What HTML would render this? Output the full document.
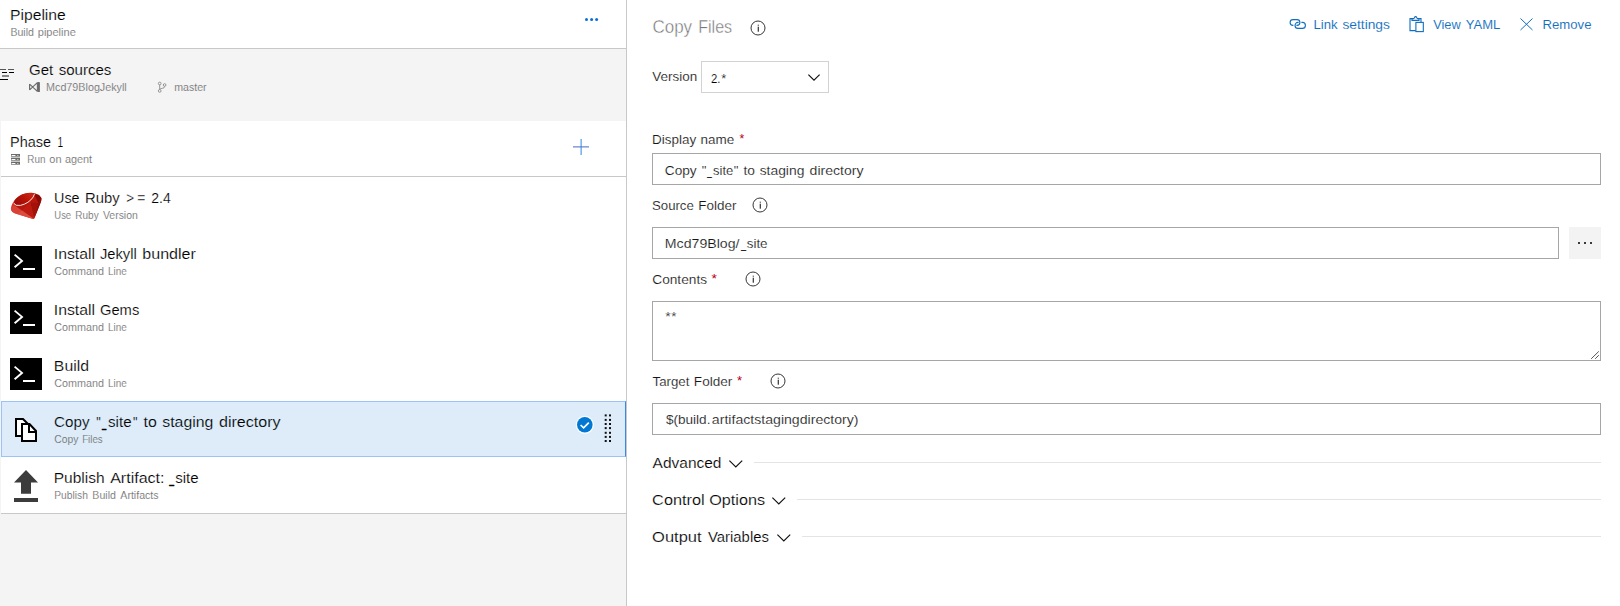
<!DOCTYPE html>
<html lang="en">
<head>
<meta charset="utf-8">
<title>Build pipeline - Copy Files</title>
<style>
*{box-sizing:border-box;margin:0;padding:0}
html,body{width:1620px;height:606px;overflow:hidden;background:#fff}
body{font-family:"Liberation Sans",sans-serif;color:#000;position:relative;font-size:14px}
.b{position:absolute}
.t{position:absolute;white-space:pre;line-height:1}
.w{position:absolute;left:0;top:0;transform-origin:0 50%}
svg{position:absolute;overflow:visible}
.inp{position:absolute;border:1px solid #a6a6a6;background:#fff}
.hr{position:absolute;height:1px;background:#e4e4e4}
</style>
</head>
<body>
<aside class="tasks" aria-label="Build pipeline tasks">
<div class="b" style="left:0;top:0;width:626px;height:606px;background:#f4f4f4"></div>
<div class="b" style="left:0;top:0;width:626px;height:48px;background:#fff"></div>
<div class="b" style="left:0;top:48px;width:626px;height:1px;background:#c8c8c8"></div>
<div class="b" style="left:1px;top:121px;width:625px;height:55px;background:#fff"></div>
<div class="b" style="left:1px;top:176px;width:625px;height:1px;background:#c8c8c8"></div>
<div class="b" style="left:1px;top:177px;width:625px;height:336px;background:#fff"></div>
<div class="b" style="left:1px;top:513px;width:625px;height:1px;background:#c8c8c8"></div>
<div class="b" style="left:1px;top:401px;width:625px;height:56px;background:#deecf9;border:1px solid #9cc3f8;border-right-color:#3c86e6"></div>
<div class="b" style="left:626px;top:0;width:1px;height:606px;background:#c8c8c8"></div>
<!-- get sources glyph (clipped at left edge) -->
<div class="b" style="left:0;top:69px;width:6px;height:1px;background:#555"></div>
<div class="b" style="left:8px;top:69px;width:6px;height:1px;background:#555"></div>
<div class="b" style="left:2px;top:72px;width:5px;height:1px;background:#000"></div>
<div class="b" style="left:9px;top:72px;width:5px;height:1px;background:#000"></div>
<div class="b" style="left:2px;top:75px;width:7px;height:2px;background:#888"></div>
<div class="b" style="left:0;top:79px;width:8px;height:1px;background:#000"></div>
<!-- visual studio glyph -->
<svg style="left:29px;top:81px" width="12" height="12" viewBox="0 0 12 12"><path d="M0.6 3 V9 M0.6 3.2 L8.6 10.6 M0.6 8.8 L8.6 1.4 M8.4 1.6 V10.4" fill="none" stroke="#6a6a6a" stroke-width="1.15"/><rect x="8.6" y="1" width="2.3" height="10" rx="0.4" fill="#6a6a6a"/></svg>
<!-- branch glyph -->
<svg style="left:157px;top:81px" width="10" height="12" viewBox="0 0 10 12"><g fill="none" stroke="#8a8a8a" stroke-width="0.9"><circle cx="2.7" cy="2.5" r="1.35"/><circle cx="2.7" cy="9.9" r="1.35"/><circle cx="7.6" cy="4" r="1.35"/><path d="M2.7 3.9 V8.5 M7.6 5.4 Q7.6 7.2 5.4 7.3 Q2.9 7.4 2.8 8.5"/></g></svg>
<!-- server glyph -->
<svg style="left:11px;top:154px" width="9" height="11" viewBox="0 0 9 11"><rect x="0" y="0" width="9" height="11" fill="#c9c9c9"/><g fill="#6b6b6b"><rect x="0" y="0" width="9" height="3"/><rect x="0" y="4" width="9" height="3"/><rect x="0" y="8" width="9" height="3"/></g><g fill="#fff"><rect x="0.6" y="1" width="3.8" height="1"/><rect x="0.6" y="5" width="3.8" height="1"/><rect x="0.6" y="9" width="3.8" height="1"/></g><g fill="#c8d6c0"><rect x="6.2" y="1" width="1.2" height="1"/><rect x="6.2" y="5" width="1.2" height="1"/><rect x="6.2" y="9" width="1.2" height="1"/></g><g fill="#9c9c9c"><rect x="0" y="2" width="9" height="1"/><rect x="0" y="6" width="9" height="1"/><rect x="0" y="10" width="9" height="1"/></g></svg>
<!-- pipeline more dots -->
<svg style="left:584px;top:17px" width="16" height="5" viewBox="0 0 16 5"><g fill="#0a6fd8"><circle cx="2.5" cy="2.5" r="1.5"/><circle cx="7.6" cy="2.5" r="1.5"/><circle cx="12.6" cy="2.5" r="1.5"/></g></svg>
<!-- plus -->
<svg style="left:573px;top:139px" width="16" height="16" viewBox="0 0 16 16"><rect x="0" y="7.4" width="16" height="1" fill="#4a68c4"/><rect x="7.6" y="0" width="1" height="16" fill="#2f86e0"/></svg>
<!-- ruby -->
<svg style="left:10px;top:190px" width="32" height="32" viewBox="0 0 32 32">
<defs>
<linearGradient id="rb" x1="0" y1="1" x2="1" y2="0"><stop offset="0" stop-color="#e24d40"/><stop offset="0.5" stop-color="#c62216"/><stop offset="1" stop-color="#a81007"/></linearGradient>
<linearGradient id="rt" x1="0" y1="0.6" x2="1" y2="0.4"><stop offset="0" stop-color="#98090a"/><stop offset="0.55" stop-color="#b81408"/><stop offset="1" stop-color="#cf2a14"/></linearGradient>
</defs>
<path d="M0.9 18.8 C1.4 14 4.4 9.4 9.9 5.6 C14 3 19 2.3 23 2.9 C26.4 3.4 29.6 4.8 31.3 7.8 C31.9 9 31.2 11.2 30.1 14 L24.4 28.3 Q23.9 29.2 23 28.9 L6.9 24.1 Q1 22.4 0.9 18.8 Z" fill="url(#rb)"/>
<path d="M24.1 4.5 L28.9 4.8 L31.4 8.2 L28.3 12.9 Z" fill="#870a05"/>
<path d="M24.1 4.5 L28.3 12.9 L20.3 12.3 Z" fill="#b5160d"/>
<path d="M20.3 12.3 L28.3 12.9 L24.1 28.6 Z" fill="#a3120a"/>
<path d="M28.3 12.9 L31.4 8.2 Q31.6 10 30.1 14 L24.3 28.4 Z" fill="#900d07"/>
<path d="M4.2 15 L12 20.4 L6.9 24.1 Q1.4 22.6 0.9 18.8 Z" fill="#d84236"/>
<path d="M12 20.4 L20.3 12.3 L23.7 28.8 Z" fill="#bd1b11"/>
<path d="M6.9 24.1 L12 20.4 L23.7 28.8 Q23.3 29.1 22.6 28.8 Z" fill="#dc4c40"/>
<path d="M4.2 15 Q9 16.6 16.5 12.8 L20.3 12.3 L12 20.4 Z" fill="#b4170d"/>
<ellipse cx="14.2" cy="9.1" rx="10.7" ry="5" transform="rotate(-23 14.2 9.1)" fill="url(#rt)"/>
<path d="M3.9 13.6 Q5.4 16.2 10.4 15.4 Q19 13.4 23.2 7 L24.3 4.5" fill="none" stroke="#fff3f0" stroke-width="1" stroke-linecap="round" opacity="0.92"/>
</svg>
<!-- terminal icons -->
<svg style="left:10px;top:246px" width="32" height="32" viewBox="0 0 32 32"><rect width="32" height="32" fill="#000"/><path d="M4.6 8.6 L12 14.9 L4.6 21.2" fill="none" stroke="#fff" stroke-width="1.9"/><rect x="13" y="22" width="12" height="2" fill="#fff"/></svg>
<svg style="left:10px;top:302px" width="32" height="32" viewBox="0 0 32 32"><rect width="32" height="32" fill="#000"/><path d="M4.6 8.6 L12 14.9 L4.6 21.2" fill="none" stroke="#fff" stroke-width="1.9"/><rect x="13" y="22" width="12" height="2" fill="#fff"/></svg>
<svg style="left:10px;top:358px" width="32" height="32" viewBox="0 0 32 32"><rect width="32" height="32" fill="#000"/><path d="M4.6 8.6 L12 14.9 L4.6 21.2" fill="none" stroke="#fff" stroke-width="1.9"/><rect x="13" y="22" width="12" height="2" fill="#fff"/></svg>
<!-- copy files icon -->
<svg style="left:10px;top:414px" width="32" height="32" viewBox="0 0 32 32"><g fill="#fff" stroke="#000" stroke-width="2" stroke-linejoin="miter"><path d="M6 5 H13 L18 10 V22 H6 Z"/><path d="M12 10 H19.5 L26 17 V27 H12 Z"/><path d="M19 10 V18 H26" fill="none"/></g></svg>
<!-- upload icon -->
<svg style="left:10px;top:470px" width="32" height="32" viewBox="0 0 32 32"><path d="M16 0 L28 12.6 H21 V23.8 H11 V12.6 H4 Z" fill="#3c3c3c"/><rect x="4" y="28" width="24" height="4" fill="#3c3c3c"/></svg>
<!-- selected check -->
<svg style="left:575px;top:415px" width="20" height="20" viewBox="0 0 20 20"><circle cx="9.8" cy="9.8" r="9" fill="#fff"/><circle cx="9.8" cy="9.8" r="7.8" fill="#0078d4"/><path d="M5.6 10 L8.6 12.8 L13.8 7.6" fill="none" stroke="#fff" stroke-width="1.7"/></svg>
<!-- drag handle -->
<svg style="left:604px;top:414px" width="8" height="29" viewBox="0 0 8 29"><g fill="#111">
<rect x="0.7" y="0.4" width="2" height="2"/><rect x="5" y="0.4" width="2" height="2"/>
<rect x="0.7" y="4.9" width="2" height="2"/><rect x="5" y="4.9" width="2" height="2"/>
<rect x="0.7" y="9" width="2" height="2"/><rect x="5" y="9" width="2" height="2"/>
<rect x="0.7" y="13.1" width="2" height="2"/><rect x="5" y="13.1" width="2" height="2"/>
<rect x="0.7" y="17.8" width="2" height="2"/><rect x="5" y="17.8" width="2" height="2"/>
<rect x="0.7" y="21.9" width="2" height="2"/><rect x="5" y="21.9" width="2" height="2"/>
<rect x="0.7" y="26" width="2" height="2"/><rect x="5" y="26" width="2" height="2"/>
</g></svg>
<span class="t" id="t1" style="left:11px;top:7px;font-size:15.36px;color:#000;-webkit-text-stroke:0.18px #fff"><span class="w" id="t1_0" style="transform:translateX(-1.04px) scaleX(1.022)">Pipeline</span></span>
<span class="t" id="t2" style="left:11px;top:27px;font-size:10.62px;color:#707070;-webkit-text-stroke:0.12px #fff"><span class="w" id="t2_0" style="transform:translateX(-0.6px) scaleX(0.998)">Build</span> <span class="w" id="t2_1" style="transform:translateX(26.74px) scaleX(1.041)">pipeline</span></span>
<span class="t" id="t3" style="left:29px;top:62px;font-size:15.36px;color:#000;-webkit-text-stroke:0.18px #f4f4f4"><span class="w" id="t3_0" style="transform:translateX(-0.02px) scaleX(0.98)">Get</span> <span class="w" id="t3_1" style="transform:translateX(29.65px) scaleX(0.98)">sources</span></span>
<span class="t" id="t4" style="left:46px;top:82px;font-size:10.62px;color:#707070;-webkit-text-stroke:0.12px #f4f4f4"><span class="w" id="t4_0" style="transform:translateX(0.04px) scaleX(1.014)">Mcd79BlogJekyll</span></span>
<span class="t" id="t5" style="left:175px;top:82px;font-size:10.62px;color:#707070;-webkit-text-stroke:0.12px #f4f4f4"><span class="w" id="t5_0" style="transform:translateX(-0.75px) scaleX(0.998)">master</span></span>
<span class="t" id="t6" style="left:11px;top:134px;font-size:15.36px;color:#000;-webkit-text-stroke:0.18px #fff"><span class="w" id="t6_0" style="transform:translateX(-0.93px) scaleX(0.941)">Phase</span> <span class="w" id="t6_1" style="transform:translateX(46.54px) scaleX(0.66)">1</span></span>
<span class="t" id="t7" style="left:28px;top:154px;font-size:10.62px;color:#707070;-webkit-text-stroke:0.12px #fff"><span class="w" id="t7_0" style="transform:translateX(-0.64px) scaleX(0.929)">Run</span> <span class="w" id="t7_1" style="transform:translateX(21.35px) scaleX(1.035)">on</span> <span class="w" id="t7_2" style="transform:translateX(36.91px) scaleX(1.024)">agent</span></span>
<span class="t" id="r0a" style="left:55px;top:190px;font-size:15.36px;color:#000;-webkit-text-stroke:0.18px #fff"><span class="w" id="r0a_0" style="transform:translateX(-0.92px) scaleX(0.934)">Use</span> <span class="w" id="r0a_1" style="transform:translateX(30.08px) scaleX(0.965)">Ruby</span> <span class="w" id="r0a_2" style="transform:translateX(71.31px) scaleX(0.871)">&gt;</span><span class="w" id="r0a_3" style="transform:translateX(82.32px) scaleX(0.893)">=</span> <span class="w" id="r0a_4" style="transform:translateX(96.32px) scaleX(0.911)">2.4</span></span>
<span class="t" id="r0b" style="left:55px;top:210px;font-size:10.62px;color:#707070;-webkit-text-stroke:0.12px #fff"><span class="w" id="r0b_0" style="transform:translateX(-0.68px) scaleX(0.891)">Use</span> <span class="w" id="r0b_1" style="transform:translateX(20.3px) scaleX(0.942)">Ruby</span> <span class="w" id="r0b_2" style="transform:translateX(47.91px) scaleX(0.987)">Version</span></span>
<span class="t" id="r1a" style="left:55px;top:246px;font-size:15.36px;color:#000;-webkit-text-stroke:0.18px #fff"><span class="w" id="r1a_0" style="transform:translateX(-1.24px) scaleX(1.028)">Install</span> <span class="w" id="r1a_1" style="transform:translateX(44.91px) scaleX(0.96)">Jekyll</span> <span class="w" id="r1a_2" style="transform:translateX(87.37px) scaleX(1.044)">bundler</span></span>
<span class="t" id="r1b" style="left:54px;top:266px;font-size:10.62px;color:#707070;-webkit-text-stroke:0.12px #fff"><span class="w" id="r1b_0" style="transform:translateX(0.28px) scaleX(1.015)">Command</span> <span class="w" id="r1b_1" style="transform:translateX(54.01px) scaleX(0.929)">Line</span></span>
<span class="t" id="r2a" style="left:55px;top:302px;font-size:15.36px;color:#000;-webkit-text-stroke:0.18px #fff"><span class="w" id="r2a_0" style="transform:translateX(-1.24px) scaleX(1.028)">Install</span> <span class="w" id="r2a_1" style="transform:translateX(44.93px) scaleX(0.96)">Gems</span></span>
<span class="t" id="r2b" style="left:54px;top:322px;font-size:10.62px;color:#707070;-webkit-text-stroke:0.12px #fff"><span class="w" id="r2b_0" style="transform:translateX(0.28px) scaleX(1.015)">Command</span> <span class="w" id="r2b_1" style="transform:translateX(54.01px) scaleX(0.929)">Line</span></span>
<span class="t" id="r3a" style="left:55px;top:358px;font-size:15.36px;color:#000;-webkit-text-stroke:0.18px #fff"><span class="w" id="r3a_0" style="transform:translateX(-1.14px) scaleX(1.027)">Build</span></span>
<span class="t" id="r3b" style="left:54px;top:378px;font-size:10.62px;color:#707070;-webkit-text-stroke:0.12px #fff"><span class="w" id="r3b_0" style="transform:translateX(0.28px) scaleX(1.015)">Command</span> <span class="w" id="r3b_1" style="transform:translateX(54.01px) scaleX(0.929)">Line</span></span>
<span class="t" id="r4a" style="left:54px;top:414px;font-size:15.36px;color:#000;-webkit-text-stroke:0.18px #deecf9"><span class="w" id="r4a_0" style="transform:translateX(0.1px) scaleX(0.988)">Copy</span> <span class="w" id="r4a_1" style="transform:translateX(42.26px) scaleX(0.82)">"</span><span class="w" id="r4a_2" style="transform:translateX(47.89px) scaleX(0.5);-webkit-text-stroke:0.35px currentColor">_</span><span class="w" id="r4a_3" style="transform:translateX(54.04px) scaleX(0.985)">site</span><span class="w" id="r4a_4" style="transform:translateX(79.03px) scaleX(0.82)">"</span> <span class="w" id="r4a_5" style="transform:translateX(89.47px) scaleX(1.035)">to</span> <span class="w" id="r4a_6" style="transform:translateX(108.26px) scaleX(1.031)">staging</span> <span class="w" id="r4a_7" style="transform:translateX(164.96px) scaleX(1.047)">directory</span></span>
<span class="t" id="r4b" style="left:54px;top:434px;font-size:10.62px;color:#707070;-webkit-text-stroke:0.12px #deecf9"><span class="w" id="r4b_0" style="transform:translateX(0.32px) scaleX(0.974)">Copy</span> <span class="w" id="r4b_1" style="transform:translateX(28.15px) scaleX(0.916)">Files</span></span>
<span class="t" id="r5a" style="left:55px;top:470px;font-size:15.36px;color:#000;-webkit-text-stroke:0.18px #fff"><span class="w" id="r5a_0" style="transform:translateX(-1.23px) scaleX(1.01)">Publish</span> <span class="w" id="r5a_1" style="transform:translateX(55.13px) scaleX(1.045)">Artifact:</span> <span class="w" id="r5a_2" style="transform:translateX(114.21px) scaleX(0.561);-webkit-text-stroke:0.35px currentColor">_</span><span class="w" id="r5a_3" style="transform:translateX(120.19px) scaleX(0.98)">site</span></span>
<span class="t" id="r5b" style="left:55px;top:490px;font-size:10.62px;color:#707070;-webkit-text-stroke:0.12px #fff"><span class="w" id="r5b_0" style="transform:translateX(-0.87px) scaleX(0.969)">Publish</span> <span class="w" id="r5b_1" style="transform:translateX(37.34px) scaleX(0.998)">Build</span> <span class="w" id="r5b_2" style="transform:translateX(65.33px) scaleX(0.999)">Artifacts</span></span>
</aside>
<main class="details" aria-label="Copy Files task settings">
<div class="inp" style="left:701px;top:61px;width:128px;height:32px;border-color:#d2d2d2"></div>
<div class="inp" style="left:652px;top:153px;width:949px;height:32px"></div>
<div class="inp" style="left:652px;top:227px;width:907px;height:32px"></div>
<div class="b" style="left:1569px;top:227px;width:32px;height:32px;background:#f3f3f3"></div>
<div class="inp" style="left:652px;top:301px;width:949px;height:60px"></div>
<div class="inp" style="left:652px;top:403px;width:949px;height:32px"></div>
<div class="hr" style="left:754px;top:462px;width:847px"></div>
<div class="hr" style="left:797px;top:499px;width:804px"></div>
<div class="hr" style="left:802px;top:536px;width:799px"></div>
<!-- info icons -->
<svg style="left:749.8px;top:19.55px" width="16" height="16" viewBox="0 0 16 16"><circle cx="8" cy="8" r="7" fill="none" stroke="#2b2b2b" stroke-width="0.95"/><rect x="7.7" y="4.7" width="1.2" height="1" fill="#333"/><rect x="7.7" y="6.7" width="1.2" height="5" fill="#333"/></svg>
<svg style="left:752.3px;top:197.3px" width="16" height="16" viewBox="0 0 16 16"><circle cx="8" cy="8" r="7" fill="none" stroke="#2b2b2b" stroke-width="0.95"/><rect x="7.7" y="4.7" width="1.2" height="1" fill="#333"/><rect x="7.7" y="6.7" width="1.2" height="5" fill="#333"/></svg>
<svg style="left:744.8px;top:271.3px" width="16" height="16" viewBox="0 0 16 16"><circle cx="8" cy="8" r="7" fill="none" stroke="#2b2b2b" stroke-width="0.95"/><rect x="7.7" y="4.7" width="1.2" height="1" fill="#333"/><rect x="7.7" y="6.7" width="1.2" height="5" fill="#333"/></svg>
<svg style="left:769.8px;top:373.3px" width="16" height="16" viewBox="0 0 16 16"><circle cx="8" cy="8" r="7" fill="none" stroke="#2b2b2b" stroke-width="0.95"/><rect x="7.7" y="4.7" width="1.2" height="1" fill="#333"/><rect x="7.7" y="6.7" width="1.2" height="5" fill="#333"/></svg>
<!-- link icon -->
<svg style="left:1289px;top:18px" width="18" height="12" viewBox="0 0 18 12"><g fill="none" stroke="#106ebe" stroke-width="1.1" stroke-linecap="butt"><path d="M4.4 7.4 H4 A2.9 2.9 0 0 1 4 1.6 H8 A2.9 2.9 0 0 1 8 7.4 H7.4"/><path d="M9.6 4.4 H9 A2.9 2.9 0 0 0 9 10.4 H13.4 A2.9 2.9 0 0 0 13.4 4.4 H12.4"/></g></svg>
<!-- clipboard icon -->
<svg style="left:1409px;top:16px" width="16" height="17" viewBox="0 0 16 17"><g fill="none" stroke="#106ebe" stroke-width="1.1"><path d="M6.8 14.6 H1 V2.6 H4.6 Q5.2 2.6 5.4 1.6 Q5.8 0.6 6.6 0.6 Q7.4 0.6 7.8 1.6 Q8 2.6 8.6 2.6 H12 V6.2"/><path d="M3 2.8 V4.4 H10 V2.8"/><rect x="6.9" y="6.4" width="7.4" height="9.2" fill="#fff"/></g></svg>
<!-- remove X -->
<svg style="left:1520px;top:17.5px" width="13" height="13" viewBox="0 0 13 13"><path d="M0.5 0.5 L12.5 12 M12.5 0.5 L0.5 12" fill="none" stroke="#106ebe" stroke-width="1"/></svg>
<!-- dropdown chevron -->
<svg style="left:807.5px;top:73.5px" width="12" height="7" viewBox="0 0 12 7"><path d="M0.4 0.6 L6 6.2 L11.6 0.6" fill="none" stroke="#111" stroke-width="1.15"/></svg>
<!-- section chevrons -->
<svg style="left:729px;top:459.5px" width="14" height="8" viewBox="0 0 14 8"><path d="M0.4 0.6 L6.8 7 L13.2 0.6" fill="none" stroke="#111" stroke-width="1.15"/></svg>
<svg style="left:772.3px;top:496.5px" width="14" height="8" viewBox="0 0 14 8"><path d="M0.4 0.6 L6.8 7 L13.2 0.6" fill="none" stroke="#111" stroke-width="1.15"/></svg>
<svg style="left:777.3px;top:533.5px" width="14" height="8" viewBox="0 0 14 8"><path d="M0.4 0.6 L6.8 7 L13.2 0.6" fill="none" stroke="#111" stroke-width="1.15"/></svg>
<!-- browse button dots -->
<div class="b" style="left:1578.2px;top:242px;width:1.6px;height:2px;background:#3a3a3a"></div>
<div class="b" style="left:1584.2px;top:242px;width:1.6px;height:2px;background:#3a3a3a"></div>
<div class="b" style="left:1590.2px;top:242px;width:1.6px;height:2px;background:#3a3a3a"></div>
<!-- textarea resize grip -->
<svg style="left:1590px;top:350px" width="10" height="10" viewBox="0 0 10 10"><path d="M1.2 8.8 L8.8 1.4 M5.2 8.8 L8.8 5.2" fill="none" stroke="#555" stroke-width="1"/></svg>
<span class="t" id="h1" style="left:653px;top:18px;font-size:18px;color:#767676;-webkit-text-stroke:0.4px #fff"><span class="w" id="h1_0" style="transform:translateX(-0.57px) scaleX(0.944)">Copy</span> <span class="w" id="h1_1" style="transform:translateX(45.18px) scaleX(0.893)">Files</span></span>
<span class="t" id="c1" style="left:1314px;top:18px;font-size:13.44px;color:#106ebe;-webkit-text-stroke:0.08px #fff"><span class="w" id="c1_0" style="transform:translateX(-0.5px) scaleX(0.977)">Link</span> <span class="w" id="c1_1" style="transform:translateX(28.41px) scaleX(1.026)">settings</span></span>
<span class="t" id="c2" style="left:1433px;top:18px;font-size:13.44px;color:#106ebe;-webkit-text-stroke:0.08px #fff"><span class="w" id="c2_0" style="transform:translateX(0.15px) scaleX(0.952)">View</span> <span class="w" id="c2_1" style="transform:translateX(32.76px) scaleX(0.97)">YAML</span></span>
<span class="t" id="c3" style="left:1543px;top:18px;font-size:13.44px;color:#106ebe;-webkit-text-stroke:0.08px #fff"><span class="w" id="c3_0" style="transform:translateX(-0.5px) scaleX(0.978)">Remove</span></span>
<span class="t" id="l1" style="left:652px;top:70px;font-size:13.44px;color:#161616;-webkit-text-stroke:0.15px #fff"><span class="w" id="l1_0" style="transform:translateX(0.31px) scaleX(1.003)">Version</span></span>
<span class="t" id="v1" style="left:711px;top:72px;font-size:13.44px;color:#000;-webkit-text-stroke:0.15px #fff"><span class="w" id="v1_0" style="transform:translateX(0px) scaleX(0.844)">2.</span><span class="w" id="v1_1" style="transform:translateX(10.37px) scaleX(0.952)">*</span></span>
<span class="t" id="l2" style="left:653px;top:133px;font-size:13.44px;color:#161616;-webkit-text-stroke:0.15px #fff"><span class="w" id="l2_0" style="transform:translateX(-0.97px) scaleX(1.002)">Display</span> <span class="w" id="l2_1" style="transform:translateX(47.46px) scaleX(1.001)">name</span></span>
<span class="t" id="q1" style="left:740px;top:132px;font-size:13.44px;color:#b8001a"><span class="w" id="q1_0" style="transform:translateX(-0.54px) scaleX(0.912)">*</span></span>
<span class="t" id="v2" style="left:665px;top:164px;font-size:13.44px;color:#161616;-webkit-text-stroke:0.15px #fff"><span class="w" id="v2_0" style="transform:translateX(-0.23px) scaleX(1.016)">Copy</span> <span class="w" id="v2_1" style="transform:translateX(36.86px) scaleX(0.973)">"</span><span class="w" id="v2_2" style="transform:translateX(42.24px) scaleX(0.592);-webkit-text-stroke:0.35px currentColor">_</span><span class="w" id="v2_3" style="transform:translateX(48.04px) scaleX(0.968)">site</span><span class="w" id="v2_4" style="transform:translateX(68.86px) scaleX(0.973)">"</span> <span class="w" id="v2_5" style="transform:translateX(78.54px) scaleX(1.024)">to</span> <span class="w" id="v2_6" style="transform:translateX(94.64px) scaleX(1.032)">staging</span> <span class="w" id="v2_7" style="transform:translateX(144.58px) scaleX(1.047)">directory</span></span>
<span class="t" id="l3" style="left:652px;top:199px;font-size:13.44px;color:#161616;-webkit-text-stroke:0.15px #fff"><span class="w" id="l3_0" style="transform:translateX(0.03px) scaleX(0.981)">Source</span> <span class="w" id="l3_1" style="transform:translateX(46.26px) scaleX(1.002)">Folder</span></span>
<span class="t" id="v3" style="left:666px;top:237px;font-size:13.44px;color:#161616;-webkit-text-stroke:0.15px #fff"><span class="w" id="v3_0" style="transform:translateX(-1.19px) scaleX(1.052)">Mcd79Blog/</span><span class="w" id="v3_1" style="transform:translateX(75.16px) scaleX(0.625);-webkit-text-stroke:0.35px currentColor">_</span><span class="w" id="v3_2" style="transform:translateX(80.71px) scaleX(0.996)">site</span></span>
<span class="t" id="l4" style="left:652px;top:273px;font-size:13.44px;color:#161616;-webkit-text-stroke:0.15px #fff"><span class="w" id="l4_0" style="transform:translateX(0.23px) scaleX(1.02)">Contents</span></span>
<span class="t" id="q4" style="left:712px;top:272px;font-size:13.44px;color:#b8001a"><span class="w" id="q4_0" style="transform:translateX(-0.46px) scaleX(1.031)">*</span></span>
<span class="t" id="v4" style="left:666px;top:310px;font-size:13.44px;color:#161616;-webkit-text-stroke:0.15px #fff"><span class="w" id="v4_0" style="transform:translateX(-0.63px) scaleX(1.037)">*</span><span class="w" id="v4_1" style="transform:translateX(5.31px) scaleX(0.989)">*</span></span>
<span class="t" id="l5" style="left:652px;top:375px;font-size:13.44px;color:#161616;-webkit-text-stroke:0.15px #fff"><span class="w" id="l5_0" style="transform:translateX(0.54px) scaleX(0.987)">Target</span> <span class="w" id="l5_1" style="transform:translateX(41.84px) scaleX(1.01)">Folder</span></span>
<span class="t" id="q5" style="left:737px;top:374px;font-size:13.44px;color:#b8001a"><span class="w" id="q5_0" style="transform:translateX(-0.03px) scaleX(0.975)">*</span></span>
<span class="t" id="v5" style="left:666px;top:413px;font-size:13.44px;color:#161616;-webkit-text-stroke:0.15px #fff"><span class="w" id="v5_0" style="transform:translateX(-0.12px) scaleX(1.011)">$(build.</span><span class="w" id="v5_1" style="transform:translateX(45.87px) scaleX(1.05)">artifactstagingdirectory)</span></span>
<span class="t" id="s1" style="left:652px;top:455px;font-size:15.36px;color:#000;-webkit-text-stroke:0.18px #fff"><span class="w" id="s1_0" style="transform:translateX(0.62px) scaleX(1.008)">Advanced</span></span>
<span class="t" id="s2" style="left:652px;top:492px;font-size:15.36px;color:#000;-webkit-text-stroke:0.18px #fff"><span class="w" id="s2_0" style="transform:translateX(0.11px) scaleX(1.061)">Control</span> <span class="w" id="s2_1" style="transform:translateX(57.24px) scaleX(1.054)">Options</span></span>
<span class="t" id="s3" style="left:652px;top:529px;font-size:15.36px;color:#000;-webkit-text-stroke:0.18px #fff"><span class="w" id="s3_0" style="transform:translateX(0.12px) scaleX(1.071)">Output</span> <span class="w" id="s3_1" style="transform:translateX(55.96px) scaleX(0.969)">Variables</span></span>
</main>
</body>
</html>
